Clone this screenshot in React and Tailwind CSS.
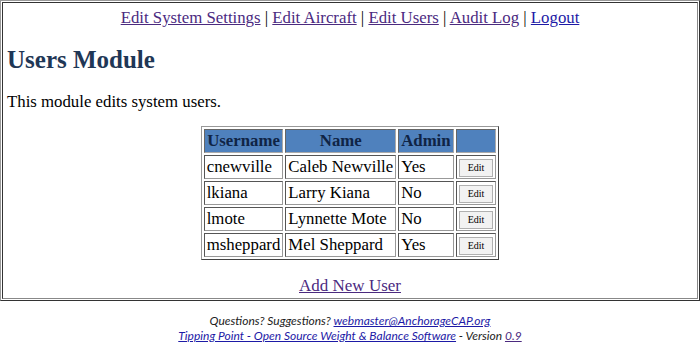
import React from 'react'

const users = [
  { username: 'cnewville', name: 'Caleb Newville', admin: 'Yes' },
  { username: 'lkiana', name: 'Larry Kiana', admin: 'No' },
  { username: 'lmote', name: 'Lynnette Mote', admin: 'No' },
  { username: 'msheppard', name: 'Mel Sheppard', admin: 'Yes' }
]

const cell = 'border border-t-[#555] border-l-[#555] border-b-[#999] border-r-[#999] px-[2px] h-[24px] leading-[20px]'
const headCell = 'border border-t-[#666] border-l-[#666] border-b-[#aaa] border-r-[#aaa] bg-[#4f81bd] text-[#0f2445] font-bold px-[2px] h-[24px] leading-[20px] text-center'

function App() {
  return (
    <div className="w-[700px] h-[342px] bg-white text-black font-['Liberation_Serif',serif] text-[16.8px]">
      <div className="border border-t-[#999] border-l-[#999] border-b-[#333] border-r-[#333] p-[1px]">
        <div className="border border-t-[#333] border-l-[#333] border-b-[#888] border-r-[#888] h-[297px] px-[4px]">
          <div className="text-center pt-[5px] leading-[20px]">
            <a href="#" className="underline text-[#4b2a7f]">Edit System Settings</a>
            {' | '}
            <a href="#" className="underline text-[#4b2a7f]">Edit Aircraft</a>
            {' | '}
            <a href="#" className="underline text-[#4b2a7f]">Edit Users</a>
            {' | '}
            <a href="#" className="underline text-[#4b2a7f]">Audit Log</a>
            {' | '}
            <a href="#" className="underline text-[#1d1aa6]">Logout</a>
          </div>
          <h1 className="text-[25px] font-bold text-[#1f3756] mt-[17px] leading-[30px]">Users Module</h1>
          <p className="mt-[17px] leading-[20px]">This module edits system users.</p>
          <div className="flex justify-center mt-[14px]">
            <table className="border border-t-[#999] border-l-[#999] border-b-[#444] border-r-[#444] border-separate border-spacing-[2px]">
              <thead>
                <tr>
                  <th className={headCell}>Username</th>
                  <th className={headCell}>Name</th>
                  <th className={headCell}>Admin</th>
                  <th className={headCell + ' w-[40px]'}></th>
                </tr>
              </thead>
              <tbody>
                {users.map((u) => (
                  <tr key={u.username}>
                    <td className={cell}>{u.username}</td>
                    <td className={cell}>{u.name}</td>
                    <td className={cell + ' w-[52px]'}>{u.admin}</td>
                    <td className={cell + ' text-center'}>
                      <button className="bg-[#f2f2f2] border border-[#b0b0b0] text-[10px] leading-[14px] px-[8px] py-[1px] align-middle">Edit</button>
                    </td>
                  </tr>
                ))}
              </tbody>
            </table>
          </div>
          <div className="text-center mt-[15px] text-[17px] leading-[22px]">
            <a href="#" className="underline text-[#4b2a7f]">Add New User</a>
          </div>
        </div>
      </div>
      <div className="text-center italic text-[12px] leading-[15px] mt-[12px] font-['Lato',sans-serif] text-[#222]">
        <div>
          Questions? Suggestions? <a href="#" className="underline text-[#1d1aa6]">webmaster@AnchorageCAP.org</a>
        </div>
        <div>
          <a href="#" className="underline text-[#1d1aa6]">Tipping Point - Open Source Weight &amp; Balance Software</a>
          {' - Version '}
          <a href="#" className="underline text-[#4b2a7f]">0.9</a>
        </div>
      </div>
    </div>
  )
}

export default App
